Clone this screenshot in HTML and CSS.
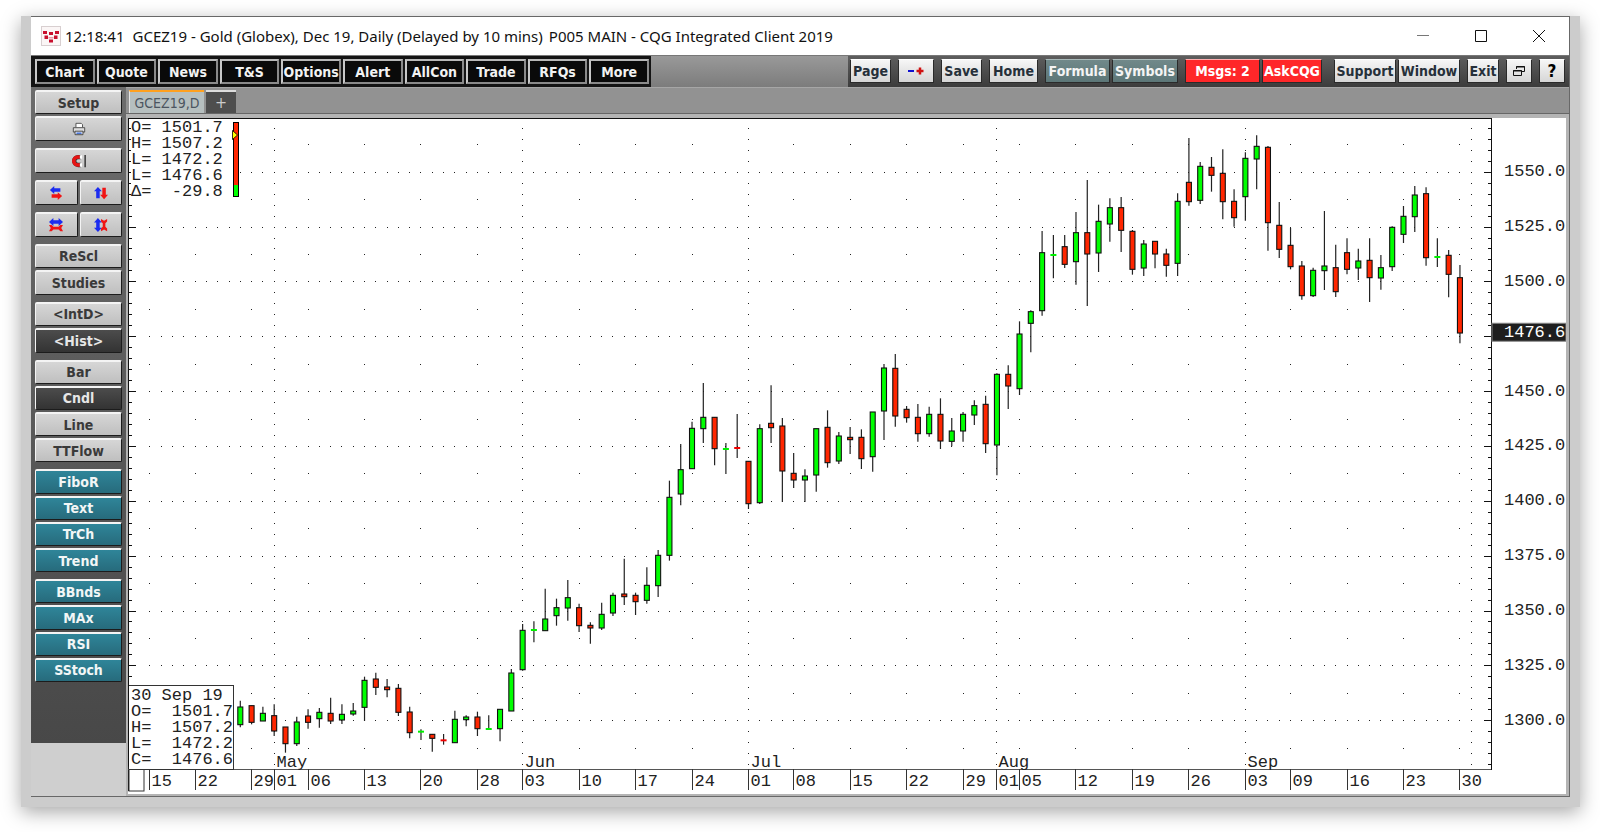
FILE: index.html
```html
<!DOCTYPE html>
<html lang="en">
<head>
<meta charset="utf-8">
<title>GCEZ19 - Gold (Globex) - CQG Integrated Client 2019</title>
<link rel="stylesheet" href="styles.css">
</head>
<body>
<div class="frame">
<div class="window">
  <header class="titlebar">
    <svg class="logo" viewBox="0 0 20 20" aria-hidden="true">
      <rect x=".5" y=".5" width="19" height="19" fill="#fbf6f6" stroke="#d8cfd0"/>
      <g fill="#c8102e">
        <rect x="2" y="5" width="4" height="3"/><rect x="3.500" y="9.500" width="3.500" height="3.500"/>
        <rect x="8" y="6" width="4" height="3"/><rect x="7.500" y="11" width="5" height="1.500" fill="#e79aa6"/><rect x="8" y="13.500" width="4" height="3"/>
        <rect x="14" y="5" width="4" height="3"/><rect x="13" y="9.500" width="3.500" height="3.500"/>
      </g>
    </svg>
    <span class="clock">12:18:41</span>
    <h1 class="title">GCEZ19 - Gold (Globex), Dec 19, Daily (Delayed by 10 mins)</h1>
    <span class="client">P005 MAIN - CQG Integrated Client 2019</span>
    <div class="controls">
      <button class="control" aria-label="Minimize"><svg viewBox="0 0 14 14"><path d="M1 6.500h12" stroke="#777"/></svg></button>
      <button class="control" aria-label="Maximize"><svg viewBox="0 0 14 14"><path d="M1.500 1.500h11v11h-11z"/></svg></button>
      <button class="control" aria-label="Close"><svg viewBox="0 0 14 14"><path d="M1 1l12 12M13 1L1 13"/></svg></button>
    </div>
  </header>

  <div class="toolbar">
    <nav class="menu">
      <button>Chart</button><button>Quote</button><button>News</button><button>T&amp;S</button><button>Options</button><button>Alert</button><button>AllCon</button><button>Trade</button><button>RFQs</button><button>More</button>
    </nav>
    <div class="tools">
      <button class="tool w41">Page</button>
      <button class="tool w36" aria-label="Page minus or plus"><svg class="wide" viewBox="0 0 18 10"><path d="M1 5h6" stroke="#1010d0" stroke-width="2"/><path d="M9.500 5h7M13 1.500v7" stroke="#d01010" stroke-width="2.500"/></svg></button>
      <button class="tool w41">Save</button>
      <button class="tool w49">Home</button>
      <div class="toolset">
        <button class="tool w65 slate">Formula</button>
        <button class="tool w66 slate">Symbols</button>
      </div>
      <div class="toolset">
        <button class="tool w75 red">Msgs: 2</button>
        <button class="tool w60 red">AskCQG</button>
      </div>
      <div class="toolset last">
        <button class="tool w62">Support</button>
        <button class="tool w62">Window</button>
      </div>
      <button class="tool w32">Exit</button>
      <button class="tool w26" aria-label="Restore chart"><svg class="small" viewBox="0 0 12 12"><path d="M3.500 4V1.500h8v5H9M3 2h9M.5 5.500h8v5h-8zM0 6h9" fill="none" stroke="#111"/></svg></button>
      <button class="tool w26 help">?</button>
    </div>
  </div>

  <div class="workspace">
    <aside class="sidebar">
      <div class="panel">
        <div class="group g2"><button>Setup</button>
          <button aria-label="Print"><svg class="icon" viewBox="0 0 16 16"><path d="M4.500 6V1.500h6l1.500 1.500v3" fill="#fff" stroke="#444"/><path d="M1.500 6.500h13v5h-13z" fill="#ddd" stroke="#444"/><path d="M3.500 10.500h9v4h-9z" fill="#fff" stroke="#333"/><path d="M5 12h6v1.500H5z" fill="#2255cc"/></svg></button></div>
        <div class="group g1"><button aria-label="Magnet"><svg class="icon" viewBox="0 0 16 16"><path d="M10 3.500H7a4.500 4.500 0 0 0 0 9h3" fill="none" stroke="#333" stroke-width="5"/><path d="M9 3.500H6.500a4.500 4.500 0 0 0 0 9H9" fill="none" stroke="#e81414" stroke-width="4"/><path d="M9 1.500h2.500v4H9zM9 10.500h2.500v4H9z" fill="#fff"/><path d="M15 1v14" stroke="#222" stroke-width="1.500"/></svg></button></div>
        <div class="group g1 pair">
          <button aria-label="Scroll horizontally"><svg class="icon" viewBox="0 0 16 16"><path d="M6 0L1 4.500 6 9V6.500h7v-4H6z" fill="#1c2cf0"/><path d="M10 7l5 4.500-5 4.500v-2.500H3v-4h7z" fill="#f01414"/></svg></button>
          <button aria-label="Scroll vertically"><svg class="icon" viewBox="0 0 16 16"><path d="M4.500 1L9 6H6.500v8h-4V6H0z" fill="#1c2cf0"/><path d="M11.500 15L16 10h-2.500V2h-4v8H7z" fill="#f01414"/></svg></button></div>
        <div class="group g1 pair">
          <button aria-label="Scale horizontally"><svg class="icon" viewBox="0 0 16 16"><path d="M5 0L0 4.500 5 9V6.500h6V9l5-4.500L11 0v2.500H5z" fill="#1c2cf0"/><path d="M0 8h3l2 2h6l2-2h3l-2 3.500 2 3.500h-3l-2-2H5l-2 2H0l2-3.500z" fill="#f01414"/></svg></button>
          <button aria-label="Scale vertically"><svg class="icon" viewBox="0 0 16 16"><path d="M4.500 0L9 5H6.500v6H9l-4.500 5L0 11h2.500V5H0z" fill="#1c2cf0"/><path d="M8 1l3.500 2L15 1v3l-2 2v4l2 2v3l-3.500-2L8 15v-3l2-2V6L8 4z" fill="#f01414"/></svg></button></div>
        <div class="group g2"><button>ReScl</button><button>Studies</button></div>
        <div class="group g2"><button>&lt;IntD&gt;</button><button class="on">&lt;Hist&gt;</button></div>
        <div class="group g4"><button>Bar</button><button class="on">Cndl</button><button>Line</button><button>TTFlow</button></div>
        <div class="group g4 teal"><button>FiboR</button><button>Text</button><button>TrCh</button><button>Trend</button></div>
        <div class="group g4 teal"><button>BBnds</button><button>MAx</button><button>RSI</button><button>SStoch</button></div>
      </div>
      <div class="rest"></div>
    </aside>

    <main class="main">
      <nav class="tabs"><button class="tab">GCEZ19,D</button><button class="add" aria-label="Add tab">+</button></nav>
      <section class="chart" aria-label="Gold daily candlestick chart">
        <svg class="plot" id="plot"></svg>
        <div class="live">
<pre>O= 1501.7
H= 1507.2
L= 1472.2
L= 1476.6
Δ=  -29.8</pre>
          <svg class="gauge" viewBox="0 0 8 75" aria-hidden="true"><rect x="1.500" y=".5" width="5" height="74" fill="#ff2600" stroke="#000"/><rect x="2" y="63" width="4" height="11" fill="#0f0"/><path d="M.5 8.500l5 4.500-5 4.500z" fill="#ff0" stroke="#000" stroke-width=".8"/></svg>
        </div>
<pre class="cursor">30 Sep 19
O=  1501.7
H=  1507.2
L=  1472.2
C=  1476.6</pre>
      </section>
    </main>
  </div>
</div>
</div>
<script src="chart.js"></script>
</body>
</html>
```
FILE: styles.css
```css
* { box-sizing: border-box; }
body {
  margin: 0;
  min-height: 100vh;
  display: flex;
  padding: 16px 20px 25px 21px;
  background: #fff;
  font-family: "DejaVu Sans Condensed", "DejaVu Sans", sans-serif;
}
button { font: inherit; border: 0; margin: 0; padding: 0; color: inherit; background: none; }
pre { margin: 0; font: 17px/16px "Liberation Mono", monospace; color: #222; }

.frame {
  flex: 1;
  display: flex;
  padding: 0 10px 10px;
  background: #ccc;
  box-shadow: 0 5px 18px rgba(0, 0, 0, .35);
}
.window {
  flex: 1;
  min-width: 0;
  display: flex;
  flex-direction: column;
  border: 1px solid #686868;
  border-left: 0;
  background: #fff;
}

.titlebar {
  display: flex;
  align-items: center;
  height: 38px;
  padding-left: 10px;
  font: 15px/20px "Noto Sans", sans-serif;
  color: #111;
  white-space: nowrap;
}
.logo { width: 20px; height: 20px; margin-right: 4px; }
.title { margin: 0 6px 0 8px; font: inherit; }
.controls { display: flex; margin-left: auto; padding-right: 1px; }
.control { width: 58px; height: 34px; display: flex; align-items: center; justify-content: center; }
.control svg { width: 14px; height: 14px; fill: none; stroke: #111; }

.toolbar {
  display: flex;
  justify-content: space-between;
  height: 32px;
  font-size: 14px;
  font-weight: bold;
  border-top: 1px solid #777;
  background: linear-gradient(#999, #7c7c7c);
}
.menu {
  width: 620px;
  display: grid;
  grid-template-columns: repeat(10, 1fr);
  gap: 2px;
  padding: 3px 2px 3px 4px;
  background: #141414;
}
.menu button {
  color: #f2f2f2;
  background: #0a0a0a;
  border: 2px solid #8a8a8a;
  border-top-color: #b8b8b8;
  border-left-color: #c8c8c8;
}
.tools {
  display: flex;
  align-items: stretch;
  gap: 7px;
  padding: 3px 4px 4px 2px;
  background: linear-gradient(#5e5e5e, #3c3c3c);
}
.toolset { display: flex; gap: 2px; }
.toolset.last { margin-left: 5px; }
.tool {
  color: #26303a;
  background: linear-gradient(#f6f6f6, #d6d6d6);
  border: 1px solid #2a2a2a;
  border-top-color: #fff;
  display: flex;
  align-items: center;
  justify-content: center;
  white-space: nowrap;
}
.slate { color: #f4f4f4; background: linear-gradient(#71898a, #5c7677); border-top-color: #a9baba; }
.red { color: #fff; background: #ff2729; border-top-color: #ffb0b0; }
.help { font-size: 17px; color: #000; }
.w26 { width: 26px; }
.w32 { width: 32px; }
.w36 { width: 36px; }
.w41 { width: 41px; }
.w49 { width: 49px; }
.w60 { width: 60px; }
.w62 { width: 62px; }
.w65 { width: 65px; }
.w66 { width: 66px; }
.w75 { width: 75px; }
.wide { width: 18px; height: 10px; }
.small { width: 12px; height: 12px; }
.icon { width: 14px; height: 14px; }

.workspace { flex: 1; min-height: 0; display: flex; }
.sidebar {
  width: 95px;
  display: flex;
  flex-direction: column;
  font-size: 14px;
  font-weight: bold;
  color: #3a3a3a;
}
.panel {
  flex: 1;
  min-height: 0;
  display: flex;
  flex-direction: column;
  gap: 7px;
  padding: 3px 4px 61px;
  background: linear-gradient(#6c6c6c, #484848);
}
.rest { height: 53px; background: #cfcfcf; }
.group { display: flex; flex-direction: column; gap: 2px; flex-basis: 0; min-height: 0; }
.g1 { flex-grow: 25; }
.g2 { flex-grow: 51; }
.g4 { flex-grow: 103; }
.pair { flex-direction: row; }
.group button {
  flex: 1;
  min-height: 0;
  display: flex;
  align-items: center;
  justify-content: center;
  background: linear-gradient(#d6d6d6, #bfbfbf);
  border: 1px solid #1c1c1c;
  border-top: 2px solid #f4f4f4;
  border-left-color: #f4f4f4;
  border-radius: 2px;
}
.group button.on { color: #e6e6e6; background: linear-gradient(#4c4c4c, #333); }
.group.teal button { color: #f2f6f6; background: linear-gradient(#2f8599, #276b7c); }

.main { flex: 1; min-width: 0; display: flex; flex-direction: column; }
.tabs {
  display: flex;
  align-items: flex-end;
  gap: 2px;
  height: 27px;
  padding-left: 3px;
  background: #929292;
  border-top: 1px solid #a6a6a6;
  border-bottom: 1px solid #666;
}
.tab {
  width: 75px;
  height: 23px;
  font-size: 14px;
  line-height: 18px;
  color: #4c5560;
  background: #b6bfbf;
  border-top: 2px solid #ffa01e;
  border-left: 1px solid #e6e6e6;
}
.add {
  width: 30px;
  height: 23px;
  font-size: 16px;
  line-height: 18px;
  color: #ccc;
  background: #4e4e4e;
  border-top: 2px solid #ddd;
}
.chart {
  position: relative;
  flex: 1;
  min-height: 0;
  border: solid #b4b4b4;
  border-width: 4px 3px 2px 2px;
  background: #fff;
}
.plot { position: absolute; inset: 0; width: 100%; height: 100%; font: 17px "Liberation Mono", monospace; fill: #222; }
.live { position: absolute; top: 1px; left: 3px; display: flex; gap: 9px; padding-bottom: 2px; background: #fff; }
.live pre { padding-top: 1px; }
.gauge { width: 8px; height: 75px; margin-top: 3px; }
.cursor {
  position: absolute;
  left: 1px;
  bottom: 24px;
  padding: 2px 0 1px 2px;
  background: #fff;
  border: solid #333;
  border-width: 1px 1px 1px 0;
}
```
FILE: chart.js
```js
// Bars: [wick top, body top, body bottom, wick bottom] in thirds of a unit below `base`;
// "g" closes up, "r" closes down; three numbers describe a doji.
const segments = [
  { base: 580, bars: `362 381 434 442 g|377 377 427 433 r|380 400 423 423 g|373 407 453 468 r|441 441 491 518 r|410 426 491 498 g|388 408 427 446 r|384 397 416 443 g|353 400 423 432 r|373 403 420 432 g|369 393 402 407 g|290 301 382 423 g|278 297 322 345 r|297 321 329 352 r|312 325 397 408 r|380 396 458 475 r|448 455 480 g|463 463 475 515 r|462 481 494 r|392 418 488 488 g|406 411 419 439 g|395 411 446 468 r|406 447 450 g|388 388 446 484 g|267 279 393 393 g` },
  { base: 360, bars: `792 811 929 932 g|784 810 847 g|686 777 812 812 g|716 743 767 797 g|660 713 744 782 g|731 743 797 816 r|787 796 804 851 r|728 763 804 810 g|698 706 759 768 g|596 702 710 735 r|698 706 725 765 r|622 676 721 731 g|570 586 677 711 g|362 412 586 602 g|252 329 402 436 g|185 205 326 326 g|69 172 206 249 g|172 172 266 316 r|249 267 342 g|162 264 294 r|304 304 431 447 r|193 206 428 432 g|76 190 203 249 r|174 198 333 426 r|279 340 360 384 r|328 348 360 426 g|206 206 345 395 g|151 202 308 323 r|216 228 303 312 g|201 232 239 282 r|208 232 296 327 r|156 156 290 335 g|12 24 153 240 g` },
  { base: 330, bars: `72 115 258 290 r|228 238 263 278 r|222 262 311 335 r|230 253 311 320 g|205 253 333 357 r|264 303 334 349 g|246 253 303 335 g|211 227 255 285 g|197 223 341 369 r|130 133 345 436 g|106 133 168 237 r|-26 12 176 195 g` },
  { base: 120, bars: `571 575 610 697 g|333 398 572 587 g|345 405 475 g|345 380 433 444 r|276 338 425 494 g|180 338 402 558 r|254 304 399 456 g|235 263 312 365 g|231 263 331 396 r|330 334 448 464 r|360 372 444 468 g|364 364 402 445 r|386 402 436 470 r|220 244 430 468 g|54 187 245 257 r|126 139 241 252 g|111 142 166 215 r|88 160 245 298 r|208 244 293 320 r|97 115 230 302 g|46 79 117 208 g|78 82 308 392 r|246 316 388 414 r|324 376 440 448 r|423 438 527 539 r|443 451 527 531 g|273 438 452 510 g|374 443 515 531 r|355 398 448 463 r|386 423 444 480 g|355 421 473 546 r|405 443 474 509 g|319 322 440 453 g|258 289 343 369 g|198 225 290 336 g|202 221 413 437 r|355 411 441 g|390 406 463 532 r|435 473 639 670 r` }
];
const weeks = [[-8, "15"], [-4, "22"], [1, "29"], [3, "01", "May"], [6, "06"], [11, "13"], [16, "20"], [21, "28"],
  [25, "03", "Jun"], [30, "10"], [35, "17"], [40, "24"], [45, "01", "Jul"], [49, "08"], [54, "15"], [59, "22"],
  [64, "29"], [67, "01", "Aug"], [69, "05"], [74, "12"], [79, "19"], [84, "26"], [89, "03", "Sep"], [93, "09"],
  [98, "16"], [103, "23"], [108, "30"]];
const plot = document.getElementById("plot");
const NS = "http://www.w3.org/2000/svg";

function add(name, attrs, text) {
  const el = document.createElementNS(NS, name);
  for (const key in attrs) el.setAttribute(key, attrs[key]);
  if (text) el.textContent = text;
  plot.append(el);
}

function draw() {
  plot.replaceChildren();
  const W = plot.clientWidth, H = plot.clientHeight;
  const kx = (W - 75) / 1363, ky = (H - 25) / 651;
  const X = i => (112.3 + 11.293 * i) * kx;
  const Y = v => (v - 118) * ky;
  const P = price => Y(720.7 - (price - 1300) * 2.194);
  const right = W - 75, floor = H - 25;
  const line = (x1, y1, x2, y2, stroke = "#111", width = 1) =>
    add("path", { d: `M${x1} ${y1}L${x2} ${y2}`, stroke, "stroke-width": width });
  const snap = v => Math.floor(v) + 0.5;
  const dot = (x, y) => `M${Math.floor(x)} ${snap(y)}h1`;

  let dots = "";
  for (let price = 1300; price <= 1550; price += 25)
    for (let i = -8; i <= 109; i++) dots += dot(X(i), P(price));
  for (let price = 1287.5; price < 1570; price += 25)
    for (const [i, , month] of weeks) if (!month) dots += dot(X(i), P(price));
  for (let price = 1280; price <= 1570; price += 5)
    for (const i of [3, 25, 45, 67, 89, 109]) dots += dot(X(i), P(price));
  add("path", { d: dots, stroke: "#222", fill: "none" });

  for (let price = 1280; price <= 1570; price += 5) {
    const y = snap(P(price)), size = price % 25 ? 3 : 7;
    line(1, y, 1 + size, y);
    line(right - size, y, right, y);
  }
  line(0, 0.5, right, 0.5, "#111");
  line(0.5, 0, 0.5, H - 3, "#111");
  line(right + 0.5, 0, right + 0.5, floor + 1, "#111");
  line(0, floor + 0.5, right, floor + 0.5, "#555");
  for (let price = 1300; price <= 1550; price += 25)
    if (price !== 1475) add("text", { x: right + 13, y: P(price) + 4 }, price.toFixed(1));
  add("rect", { x: right + 1, y: P(1476.6) - 10, width: 74, height: 18, fill: "#1e1e1e", stroke: "#888" });
  add("text", { x: right + 13, y: P(1476.6) + 4, fill: "#fff" }, "1476.6");

  for (const [i, day, month] of weeks) {
    const x = snap(X(i));
    add("text", { x: x + 2, y: floor + 17 }, day);
    line(x, floor, x, floor + 21, "#333");
    if (month) add("text", { x: x + 2, y: floor - 2 }, month);
  }
  add("rect", { x: 1, y: floor - 2, width: 15, height: 24, fill: "#fff", stroke: "#333" });

  let i = 0;
  for (const { base, bars } of segments)
    for (const bar of bars.split("|")) {
      const part = bar.split(" "), up = part.pop() === "g";
      const y = part.map(v => Y(base + v / 3)), x = X(i++), last = y.length - 1;
      line(x, y[0], x, y[last], "#222", 1.2);
      if (last === 2) line(x - 3, y[1], x + 3, y[1], up ? "#00f000" : "#f00000", 2);
      else add("rect", { x: x - 2.5, y: y[1], width: 5, height: Math.max(2, y[2] - y[1]),
        fill: up ? "#00ff00" : "#ff2600", stroke: "#111", "stroke-width": 1.1 });
    }
}
draw();
addEventListener("resize", draw);
```
